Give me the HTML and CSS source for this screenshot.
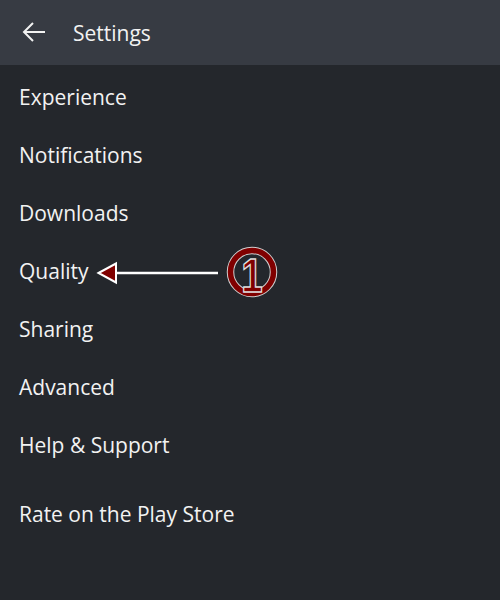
FILE: index.html
```html
<!DOCTYPE html>
<html>
<head>
<meta charset="utf-8">
<link rel="stylesheet" href="styles.css">
</head>
<body>
<div class="screen">
  <header class="appbar">
    <svg class="back" width="24" height="22" viewBox="0 0 24 22">
      <path d="M23 11H2M11 2L2 11l9 9" fill="none" stroke="#f2f2f2" stroke-width="2"/>
    </svg>
    <h1 class="title">Settings</h1>
  </header>
  <ul class="menu">
    <li class="item">Experience</li>
    <li class="item">Notifications</li>
    <li class="item">Downloads</li>
    <li class="item">Quality</li>
    <li class="item">Sharing</li>
    <li class="item">Advanced</li>
    <li class="item">Help &amp; Support</li>
    <li class="item item-rate">Rate on the Play Store</li>
  </ul>
  <svg class="annot" width="200" height="70" viewBox="0 0 200 70">
    <line x1="18" y1="33" x2="122" y2="33" stroke="#fff" stroke-width="2.5"/>
    <polygon points="2.5,33 20,23.5 20,42.5" fill="#800000" stroke="#fff" stroke-width="2"/>
    <circle cx="156" cy="32" r="21.5" fill="none" stroke="#d0d0d0" stroke-width="7.5"/>
    <circle cx="156" cy="32" r="21.5" fill="none" stroke="#800000" stroke-width="5.5"/>
    <text class="num" text-anchor="middle" transform="translate(156 52) scale(0.8 1)">1</text>
  </svg>
</div>
</body>
</html>
```
FILE: styles.css
```css
html, body {
  margin: 0;
  padding: 0;
}
body {
  background: #24272c;
  font-family: "Open Sans", "Noto Sans", sans-serif;
  color: #f2f2f2;
}
.screen {
  position: relative;
  width: 500px;
  height: 600px;
  overflow: hidden;
  background: #24272c;
}
.appbar {
  height: 65px;
  background: #373b43;
  display: flex;
  align-items: center;
  padding-left: 22px;
  box-sizing: border-box;
}
.back {
  display: block;
  margin-top: -1px;
}
.title {
  margin: 1px 0 0 27px;
  font-size: 21px;
  font-weight: 400;
  color: #f2f2f2;
  line-height: 1;
}
.menu {
  list-style: none;
  margin: 0;
  padding: 3px 0 0 19px;
  display: flex;
  flex-direction: column;
}
.item {
  height: 58px;
  display: flex;
  align-items: center;
  font-size: 21px;
  line-height: 1;
}
.item-rate {
  margin-top: 11px;
}
.annot {
  position: absolute;
  left: 96px;
  top: 240px;
}
.num {
  font-family: "Liberation Sans", sans-serif;
  font-size: 48px;
  font-weight: 700;
  fill: #800000;
  stroke: #e0e0e0;
  stroke-width: 1.5;
}
```
